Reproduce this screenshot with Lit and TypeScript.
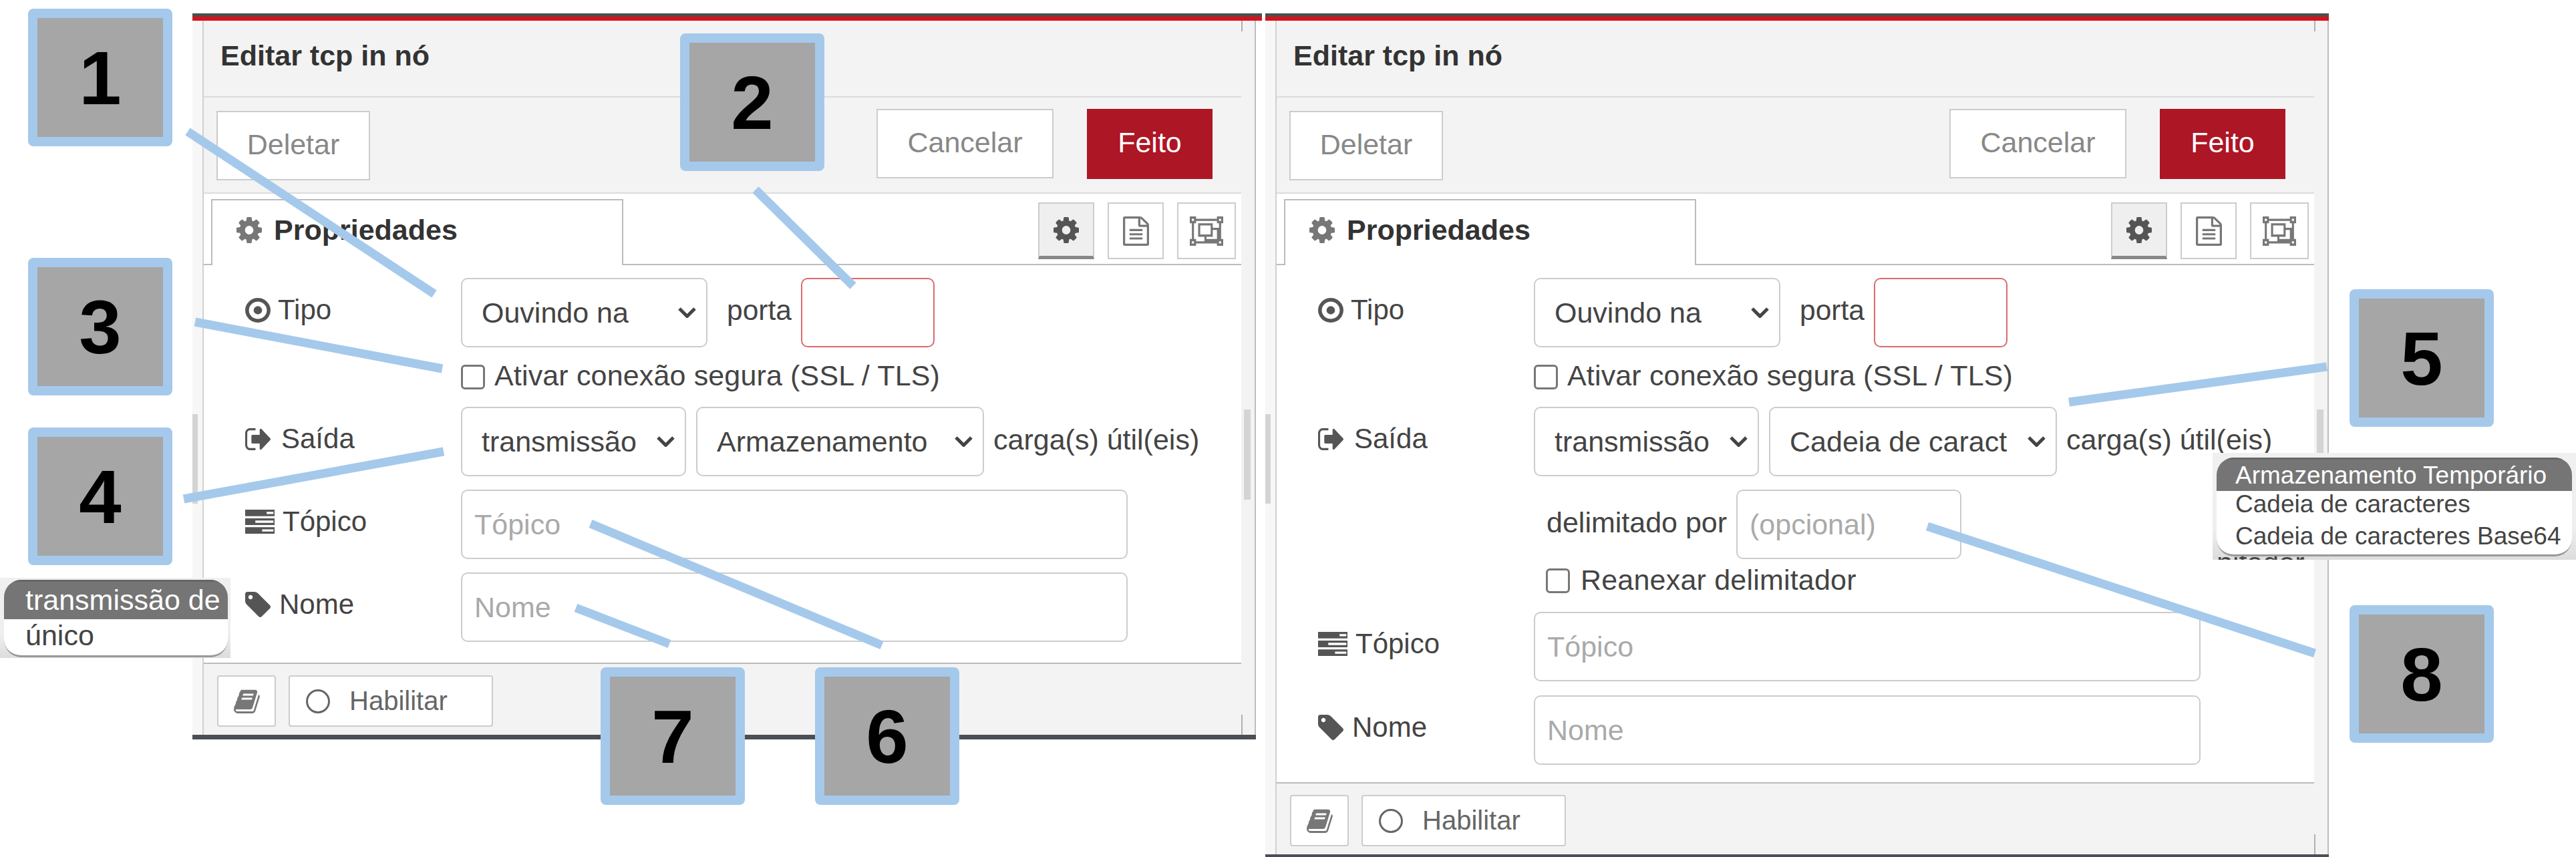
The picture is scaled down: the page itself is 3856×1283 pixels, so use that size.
import { LitElement, html, css, svg } from 'lit';
import { customElement, property } from 'lit/decorators.js';

// Font Awesome 4 style glyphs, cropped to their ink so sizes can be set from CSS
const ICONS: Record<string, [string, string]> = {
  cog: ['128 128 1536 1536', 'M1152 896q0-106-75-181t-181-75-181 75-75 181 75 181 181 75 181-75 75-181zm512-109v222q0 12-8 23t-20 13l-185 28q-19 54-39 91 35 50 107 138 10 12 10 25t-9 23q-27 37-99 108t-94 71q-12 0-26-9l-138-108q-44 23-91 38-16 136-29 186-7 28-36 28h-222q-14 0-24.5-8.5t-11.5-21.5l-28-184q-49-16-90-37l-141 107q-10 9-25 9-14 0-25-11-126-114-165-168-7-10-7-23 0-12 8-23 15-21 51-66.5t54-70.5q-27-50-41-99l-183-27q-13-2-21-12.5t-8-23.5v-222q0-12 8-23t19-13l186-28q14-46 39-92-40-57-107-138-10-12-10-24 0-10 9-23 26-36 98.5-107.5t94.5-71.5q13 0 26 10l138 107q44-23 91-38 16-136 29-186 7-28 36-28h222q14 0 24.5 8.5t11.5 21.5l28 184q49 16 90 37l142-107q9-9 24-9 13 0 25 10 129 119 165 170 7 8 7 22 0 12-8 23-15 21-51 66.5t-54 70.5q26 50 41 98l183 28q13 2 21 12.5t8 23.5z'],
  dot: ['128 128 1536 1536', 'M1152 896q0 106-75 181t-181 75-181-75-75-181 75-181 181-75 181 75 75 181zm-256-544q-148 0-273 73t-198 198-73 273 73 273 198 198 273 73 273-73 198-198 73-273-73-273-198-198-273-73zm768 544q0 209-103 385.5t-279.5 279.5-385.5 103-385.5-103-279.5-279.5-103-385.5 103-385.5 279.5-279.5 385.5-103 385.5 103 279.5 279.5 103 385.5z'],
  signout: ['64 256 1568 1280', 'M704 1440q0 4 1 20t.5 26.5-3 23.5-10 19.5-20.5 6.5h-320q-119 0-203.5-84.5t-84.5-203.5v-704q0-119 84.5-203.5t203.5-84.5h320q13 0 22.5 9.5t9.5 22.5q0 4 1 20t.5 26.5-3 23.5-10 19.5-20.5 6.5h-320q-66 0-113 47t-47 113v704q0 66 47 113t113 47h312l11.5 1 11.5 3 8 5.5 7 9 2 13.5zm928-544q0 26-19 45l-544 544q-19 19-45 19t-45-19-19-45v-288h-448q-26 0-45-19t-19-45v-384q0-26 19-45t45-19h448v-288q0-26 19-45t45-19 45 19l544 544q19 19 19 45z'],
  tasks: ['64 128 1664 1408', 'M1024 1408h640v-128h-640v128zm-384-512h1024v-128h-1024v128zm640-512h384v-128h-384v128zm512 832v256q0 26-19 45t-45 19h-1664q-26 0-45-19t-19-45v-256q0-26 19-45t45-19h1664q26 0 45 19t19 45zm0-512v256q0 26-19 45t-45 19h-1664q-26 0-45-19t-19-45v-256q0-26 19-45t45-19h1664q26 0 45 19t19 45zm0-512v256q0 26-19 45t-45 19h-1664q-26 0-45-19t-19-45v-256q0-26 19-45t45-19h1664q26 0 45 19t19 45z'],
  tag: ['128 128 1515 1515', 'M576 448q0-53-37.5-90.5t-90.5-37.5-90.5 37.5-37.5 90.5 37.5 90.5 90.5 37.5 90.5-37.5 37.5-90.5zm1067 576q0 53-37 90l-491 492q-39 37-91 37-53 0-90-37l-715-716q-38-37-64.5-101t-26.5-117v-416q0-52 38-90t90-38h416q53 0 117 26.5t102 64.5l715 714q37 39 37 91z'],
  book: ['64 96 1672 1568', 'M1703 478q40 57 18 129l-275 906q-19 64-76.5 107.5t-122.5 43.5h-923q-77 0-148.5-53.5t-99.5-131.5q-24-67-2-127 0-4 3-27t4-37q1-8-3-21.5t-3-19.5q2-11 8-21t16.5-23.5 16.5-23.5q23-38 45-91.5t30-91.5q3-10 .5-30t-.5-28q3-11 17-28t17-23q21-36 42-92t25-90q1-9-2.5-32t.5-28q4-13 22-30.5t22-22.5q19-26 42.5-84.5t27.5-96.5q1-8-3-25.5t-2-26.5q2-8 9-18t18-23 17-21q8-12 16.5-30.5t15-35 16-36 19.5-32 26.5-23.5 36-11.5 47.5 5.5l-1 3q38-9 51-9h761q74 0 114 56t18 130l-274 906q-36 119-71.5 153.5t-128.5 34.5h-869q-27 0-38 15-11 16-1 43 24 70 144 70h923q29 0 56-15.5t35-41.5l300-987q7-22 5-57 38 15 59 43zm-1064 2q-4 13 2 22.5t20 9.5h608q13 0 25.5-9.5t16.5-22.5l21-64q4-13-2-22.5t-20-9.5h-608q-13 0-25.5 9.5t-16.5 22.5zm-83 256q-4 13 2 22.5t20 9.5h608q13 0 25.5-9.5t16.5-22.5l21-64q4-13-2-22.5t-20-9.5h-608q-13 0-25.5 9.5t-16.5 22.5z'],
  file: ['128 0 1536 1792', 'M1596 380q28 28 48 76t20 88v1152q0 40-28 68t-68 28h-1344q-40 0-68-28t-28-68v-1600q0-40 28-68t68-28h896q40 0 88 20t76 48zm-444-244v376h376q-10-29-22-41l-313-313q-12-12-41-22zm384 1528v-1024h-416q-40 0-68-28t-28-68v-416h-768v1536h1280zm-1024-864q0-14 9-23t23-9h704q14 0 23 9t9 23v64q0 14-9 23t-23 9h-704q-14 0-23-9t-9-23v-64zm736 224q14 0 23 9t9 23v64q0 14-9 23t-23 9h-704q-14 0-23-9t-9-23v-64q0-14 9-23t23-9h704zm0 256q14 0 23 9t9 23v64q0 14-9 23t-23 9h-704q-14 0-23-9t-9-23v-64q0-14 9-23t23-9h704z'],
  group: ['0 64 2048 1664', 'M2048 448h-128v896h128v384h-384v-128h-1280v128h-384v-384h128v-896h-128v-384h384v128h1280v-128h384v384zm-256-256v128h128v-128h-128zm-1664 0v128h128v-128h-128zm128 1408v-128h-128v128h128zm1408-128v-128h128v-896h-128v-128h-1280v128h-128v896h128v128h1280zm256 128v-128h-128v128h128zm-512-896h384v768h-896v-256h-384v-768h896v256zm-768 384h640v-512h-640v512zm1024 256v-512h-256v384h-384v128h640z'],
};

const icon = (name: string, cls: string) => {
  const [box, d] = ICONS[name];
  return html`<svg class=${cls} viewBox=${box} preserveAspectRatio="none" fill="currentColor"><path d=${d}></path></svg>`;
};

const chevron = html`<svg class="chevron" viewBox="0 0 27 16" fill="none" stroke="currentColor" stroke-width="5"><path d="M2 2l11.5 11.5L25 2"></path></svg>`;

@customElement('tcp-editor')
class TcpEditor extends LitElement {
  @property() format = '';
  @property({ type: Boolean }) delimited = false;
  @property({ type: Boolean }) overhang = false;

  static styles = css`
    :host {
      display: block;
      width: 1592px;
      font-family: 'Liberation Sans', Arial, sans-serif;
      font-size: 43px;
      color: #444;
    }

    .topbar {
      height: 11px;
      box-sizing: border-box;
      background: #d8121b;
      border-top: 5px solid #4b4f4f;
    }
    .topbar.overhang {
      margin-right: -9px;
    }

    .shell {
      display: flex;
    }
    .strip-left {
      width: 17px;
      box-sizing: border-box;
      flex: none;
      background: #f7f7f7;
      border-right: 2px solid #d0d0d0;
    }
    .thumb-left {
      width: 8px;
      height: 134px;
      margin-top: 589px;
      background: #d4d4d4;
    }
    .strip-right {
      width: 22px;
      box-sizing: border-box;
      flex: none;
      position: relative;
      background: #f3f3f3;
      border-right: 2px solid #bdbdbd;
    }
    .thumb-right {
      width: 10px;
      height: 135px;
      margin: 582px 0 0 4px;
      background: #d4d4d4;
    }
    .strip-right::before,
    .strip-right::after {
      content: '';
      position: absolute;
      left: 0;
      width: 2px;
      background: #b0b0b0;
    }
    .strip-right::before {
      top: 0;
      height: 16px;
    }
    .strip-right::after {
      bottom: 0;
      height: 30px;
    }

    .main {
      flex: 1;
      min-width: 0;
      background: #fff;
    }

    .title {
      height: 113px;
      padding-left: 25px;
      background: #f3f3f3;
      border-bottom: 2px solid #dcdcdc;
      display: flex;
      align-items: center;
      font-weight: 700;
      color: #333;
    }
    .title span {
      margin-top: -8px;
    }

    .actions {
      height: 125px;
      padding: 17px 43px 0 19px;
      background: #f3f3f3;
      border-bottom: 2px solid #dcdcdc;
      display: flex;
      align-items: flex-start;
      gap: 50px;
    }
    .btn {
      box-sizing: border-box;
      height: 104px;
      display: flex;
      align-items: center;
      justify-content: center;
      background: #fff;
      border: 2px solid #ccc;
      color: #888;
    }
    .actions .btn {
      padding-bottom: 4px;
    }
    .btn.delete {
      width: 230px;
      margin: 3px auto 0 0;
    }
    .btn.cancel {
      width: 265px;
    }
    .btn.done {
      width: 188px;
      height: 105px;
      background: #ad1625;
      border-color: #ad1625;
      color: #fff;
    }

    .tabs {
      height: 107px;
      box-sizing: border-box;
      padding: 8px 8px 0 11px;
      border-bottom: 2px solid #bbb;
      display: flex;
      align-items: flex-start;
    }
    .tab {
      width: 617px;
      height: 99px;
      box-sizing: border-box;
      padding: 0 0 8px 36px;
      background: #fff;
      border: 2px solid #bbb;
      border-bottom: none;
      display: flex;
      align-items: center;
      gap: 18px;
      font-weight: 700;
      color: #333;
      margin-right: auto;
    }
    .tab .i-gear {
      width: 38px;
      height: 39px;
      color: #777;
    }
    .tab-btn {
      box-sizing: border-box;
      width: 84px;
      height: 85px;
      margin-top: 5px;
      margin-left: 20px;
      display: flex;
      align-items: center;
      justify-content: center;
      border: 2px solid #ccc;
      color: #777;
    }
    .tab-btn.active {
      background: #efefef;
      border-bottom: 5px solid #888;
      color: #555;
    }
    .tab-btn.wide {
      width: 88px;
    }
    .tab-btn .i-gear {
      width: 38px;
      height: 39px;
    }
    .i-file {
      width: 39px;
      height: 44px;
    }
    .i-group {
      width: 50px;
      height: 44px;
    }

    .form {
      padding: 19px 0 31px 62px;
      display: flex;
      flex-direction: column;
    }
    .form.delimited {
      padding-bottom: 26px;
    }
    .row {
      display: flex;
      align-items: center;
    }
    .row.check-row {
      height: 40px;
      margin-top: 24px;
    }
    .row.output {
      margin-top: 25px;
      gap: 15px;
    }
    .row.field {
      margin-top: 20px;
    }
    .row.delim {
      margin-top: 20px;
    }
    .row.reattach {
      height: 40px;
      margin-top: 12px;
    }
    .row.after-reattach {
      margin-top: 27px;
    }
    .row.last {
      margin-top: 21px;
    }

    .label {
      width: 323px;
      flex: none;
      display: flex;
      align-items: center;
      padding-bottom: 8px;
      box-sizing: border-box;
      font-size: 42px;
      color: #444;
    }
    .row.output .label {
      margin-right: -15px;
    }
    .label svg {
      color: #555;
      flex: none;
    }
    .i-dot {
      width: 38px;
      height: 37px;
      margin-right: 11px;
    }
    .i-out {
      width: 38px;
      height: 33px;
      margin-right: 16px;
    }
    .i-tasks {
      width: 44px;
      height: 36px;
      margin-right: 12px;
    }
    .i-tag {
      width: 38px;
      height: 38px;
      margin-right: 13px;
    }

    .select {
      box-sizing: border-box;
      height: 104px;
      padding: 0 15px 0 29px;
      display: flex;
      align-items: center;
      justify-content: space-between;
      background: #fff;
      border: 2px solid #ccc;
      border-radius: 10px;
      white-space: nowrap;
    }
    .select.mode {
      width: 369px;
    }
    .select.stream {
      width: 337px;
    }
    .select.format {
      width: 431px;
    }
    .chevron {
      width: 27px;
      height: 16px;
      flex: none;
    }

    input {
      box-sizing: border-box;
      height: 104px;
      padding: 0 0 0 18px;
      font: inherit;
      background: #fff;
      color: #444;
      border: 2px solid #ccc;
      border-radius: 10px;
      outline: none;
    }
    input::placeholder {
      color: #aaa;
      opacity: 1;
    }
    input.port {
      width: 200px;
      border-color: #dc6a6f;
    }
    input.long {
      width: 998px;
    }
    input.delimiter {
      width: 337px;
    }
    input[type='checkbox'] {
      appearance: none;
      width: 36px;
      height: 37px;
      padding: 0;
      margin: 0;
      flex: none;
      border: 3px solid #777;
      border-radius: 6px;
    }

    .port-label {
      margin: 0 14px 6px 29px;
      font-size: 42.5px;
    }
    .check-row .indent {
      width: 323px;
      flex: none;
    }
    .check-row label {
      margin-left: 14px;
      margin-bottom: 4px;
      letter-spacing: 0.15px;
    }
    .payload {
      margin: 0 0 6px -1px;
      color: #444;
    }
    .delim .indent {
      width: 342px;
      flex: none;
    }
    .delim-text {
      width: 284px;
      flex: none;
      margin-bottom: 6px;
    }
    .reattach .indent {
      width: 341px;
      flex: none;
    }
    .reattach label {
      margin-left: 16px;
      margin-bottom: 2px;
      letter-spacing: 0.2px;
    }

    .footer {
      height: 89px;
      padding: 17px 0 0 20px;
      background: #f3f3f3;
      border-top: 2px solid #bbb;
      display: flex;
      gap: 19px;
    }
    .footer .btn {
      height: 77px;
      border-radius: 4px;
      font-size: 40px;
      color: #666;
    }
    .footer .help {
      width: 88px;
      color: #777;
    }
    .i-book {
      width: 39px;
      height: 36px;
    }
    .footer .enable {
      width: 306px;
      justify-content: flex-start;
      padding-left: 24px;
      gap: 29px;
    }
    .radio {
      width: 36px;
      height: 36px;
      box-sizing: border-box;
      border: 3px solid #666;
      border-radius: 50%;
    }

    .bottombar {
      height: 7px;
      background: #4b4f55;
    }
    .bottombar.short {
      height: 6px;
    }
  `;

  render() {
    return html`
      <div class="topbar ${this.overhang ? 'overhang' : ''}"></div>
      <div class="shell">
        <div class="strip-left"><div class="thumb-left"></div></div>
        <div class="main">
          <div class="title"><span>Editar tcp in nó</span></div>
          <div class="actions">
            <div class="btn delete">Deletar</div>
            <div class="btn cancel">Cancelar</div>
            <div class="btn done">Feito</div>
          </div>
          <div class="tabs">
            <div class="tab">${icon('cog', 'i-gear')}<span>Propriedades</span></div>
            <div class="tab-btn active">${icon('cog', 'i-gear')}</div>
            <div class="tab-btn">${icon('file', 'i-file')}</div>
            <div class="tab-btn wide">${icon('group', 'i-group')}</div>
          </div>
          <div class="form ${this.delimited ? 'delimited' : ''}">
            <div class="row">
              <div class="label">${icon('dot', 'i-dot')}Tipo</div>
              <div class="select mode"><span>Ouvindo na</span>${chevron}</div>
              <span class="port-label">porta</span>
              <input class="port" type="text" />
            </div>
            <div class="row check-row">
              <div class="indent"></div>
              <input type="checkbox" />
              <label>Ativar conexão segura (SSL / TLS)</label>
            </div>
            <div class="row output">
              <div class="label">${icon('signout', 'i-out')}Saída</div>
              <div class="select stream"><span>transmissão</span>${chevron}</div>
              <div class="select format"><span>${this.format}</span>${chevron}</div>
              <span class="payload">carga(s) útil(eis)</span>
            </div>
            ${this.delimited
              ? html`
                  <div class="row delim">
                    <div class="indent"></div>
                    <span class="delim-text">delimitado por</span>
                    <input class="delimiter" type="text" placeholder="(opcional)" />
                  </div>
                  <div class="row reattach">
                    <div class="indent"></div>
                    <input type="checkbox" />
                    <label>Reanexar delimitador</label>
                  </div>
                `
              : ''}
            <div class="row field ${this.delimited ? 'after-reattach' : ''}">
              <div class="label">${icon('tasks', 'i-tasks')}Tópico</div>
              <input class="long" type="text" placeholder="Tópico" />
            </div>
            <div class="row field ${this.delimited ? 'last' : ''}">
              <div class="label">${icon('tag', 'i-tag')}Nome</div>
              <input class="long" type="text" placeholder="Nome" />
            </div>
          </div>
          <div class="footer">
            <div class="btn help">${icon('book', 'i-book')}</div>
            <div class="btn enable"><span class="radio"></span><span>Habilitar</span></div>
          </div>
        </div>
        <div class="strip-right"><div class="thumb-right"></div></div>
      </div>
      <div class="bottombar ${this.delimited ? 'short' : ''}"></div>
    `;
  }
}

// callout numbers and leader lines of the figure, in page coordinates
const BADGES = [
  { n: 1, x: 42, y: 13 },
  { n: 2, x: 1018, y: 50 },
  { n: 3, x: 42, y: 386 },
  { n: 4, x: 42, y: 640 },
  { n: 5, x: 3517, y: 433 },
  { n: 6, x: 1220, y: 999 },
  { n: 7, x: 899, y: 999 },
  { n: 8, x: 3517, y: 906 },
];

const LEADERS = [
  [281, 197, 650, 440],
  [1131, 284, 1277, 428],
  [292, 482, 662, 552],
  [275, 747, 664, 676],
  [3097, 602, 3483, 549],
  [884, 784, 1320, 966],
  [862, 910, 1002, 964],
  [2885, 788, 3465, 978],
];

@customElement('app-root')
class AppRoot extends LitElement {
  static styles = css`
    :host {
      display: block;
      position: relative;
      width: 3856px;
      height: 1283px;
      overflow: hidden;
      background: #fff;
      font-family: 'Liberation Sans', Arial, sans-serif;
    }

    .panels {
      display: flex;
      align-items: flex-start;
      gap: 14px;
      padding: 20px 0 0 288px;
    }

    .leaders {
      position: absolute;
      left: 0;
      top: 0;
    }

    .badge {
      position: absolute;
      box-sizing: border-box;
      width: 216px;
      height: 206px;
      display: flex;
      align-items: center;
      justify-content: center;
      background: #a6a6a6;
      border: 14px solid #a5c9eb;
      border-radius: 8px;
      color: #000;
      font-size: 114px;
      font-weight: 700;
    }

    .dropdown {
      position: absolute;
      box-sizing: border-box;
      overflow: hidden;
      background: linear-gradient(#f0f0f0, #efefef 70%, #dcdcdc);
    }
    .dropdown.stream {
      left: 0;
      top: 865px;
      width: 345px;
      height: 120px;
      padding: 3px 4px 0 6px;
      font-size: 43px;
    }
    .dropdown.format {
      left: 3312px;
      top: 678px;
      width: 544px;
      height: 160px;
      padding: 7px 6px 0 6px;
      font-size: 37px;
    }
    .list {
      position: relative;
      background: #fff;
      border-bottom: 3px solid #999;
      border-radius: 26px;
      overflow: hidden;
      white-space: nowrap;
      color: #444;
    }
    .stream .list {
      height: 113px;
      padding-left: 32px;
    }
    .format .list {
      height: 145px;
      padding-left: 28px;
    }
    .picked {
      background: #757575;
      color: #fff;
      margin-left: -32px;
      padding-left: 32px;
      border-top: 3px solid #666;
    }
    .format .picked {
      margin-left: -28px;
      padding-left: 28px;
      height: 47px;
      line-height: 47px;
    }
    .stream .picked {
      height: 56px;
      line-height: 54px;
    }
    .stream .item {
      line-height: 48px;
    }
    .format .item {
      line-height: 48px;
    }
    .format .item.first {
      margin-top: -4px;
    }
    .behind {
      position: absolute;
      left: 6px;
      bottom: -29px;
      font-size: 43px;
      color: #444;
    }
  `;

  render() {
    return html`
      <div class="panels">
        <tcp-editor format="Armazenamento" overhang></tcp-editor>
        <tcp-editor format="Cadeia de caract" delimited></tcp-editor>
      </div>

      <svg class="leaders" width="3856" height="1283" stroke="#a5c9eb" stroke-width="13">
        ${LEADERS.map(([x1, y1, x2, y2]) => svg`<line x1=${x1} y1=${y1} x2=${x2} y2=${y2}></line>`)}
      </svg>

      ${BADGES.map((b) => html`<div class="badge" style="left:${b.x}px;top:${b.y}px">${b.n}</div>`)}

      <div class="dropdown stream">
        <div class="list">
          <div class="picked">transmissão de</div>
          <div class="item">único</div>
        </div>
      </div>

      <div class="dropdown format">
        <span class="behind">nitador</span>
        <div class="list">
          <div class="picked">Armazenamento Temporário</div>
          <div class="item first">Cadeia de caracteres</div>
          <div class="item">Cadeia de caracteres Base64</div>
        </div>
      </div>
    `;
  }
}
